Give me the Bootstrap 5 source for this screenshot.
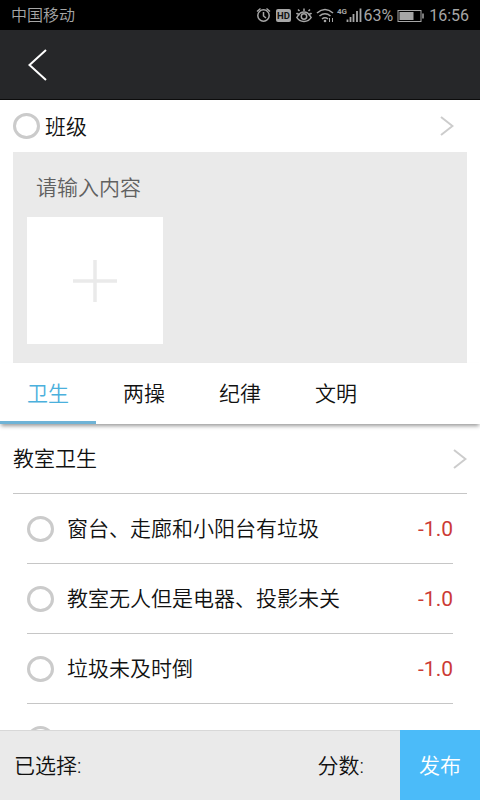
<!DOCTYPE html>
<html lang="zh-CN">
<head>
<meta charset="utf-8">
<meta name="viewport" content="width=device-width, initial-scale=1">
<title>班级</title>
<link href="https://cdn.jsdelivr.net/npm/bootstrap@5.3.0/dist/css/bootstrap.min.css" rel="stylesheet">
<style>
body { font-family: Roboto, "Noto Sans CJK SC", sans-serif; font-size: 21px; line-height: 32px; font-weight: 350; color: #111; background: #fff; }
.status-bar { height: 30px; background: #000; color: #a6a6a6; font-size: 16px; line-height: 30px; padding: 2px 11px 0; }
.status-bar svg { display: block; flex: none; }
.status-bar svg text { font-family: Roboto, sans-serif; font-weight: 700; stroke: none; }
.status-info { font-weight: 400; }
.title-bar { height: 70px; background: #262729; border-bottom: 1px solid #0c0c0c; padding: 0 28px; }
.class-row { height: 52px; padding: 0 26px 0 13px; }
.class-row label { padding: 2px 0 0 5px; }
.round-check.form-check-input { width: 27px; height: 26px; margin: 0; border: 3px solid #cbcbcb; border-radius: 50%; background-color: #fff; flex: none; }
.compose { background: #eaeaea; margin: 0 13px; padding: 14px 14px 19px; }
.compose-text.form-control { background: transparent; border: 0; border-radius: 0; box-shadow: none; resize: none; height: 51px; padding: 6px 9px; font-size: 21px; line-height: 32px; font-weight: 350; color: #111; }
.compose-text.form-control::placeholder { color: #606060; opacity: 1; }
.add-photo.btn { width: 136px; height: 127px; background: #fff; }
.tab-strip { height: 61px; box-shadow: 0 3px 4px -1px rgba(0,0,0,.4); background: #fff; z-index: 1; }
.tab-strip .nav-link { width: 20%; padding: 4px 0 0; color: #111; background: transparent; border: 0; border-bottom: 3px solid transparent; border-radius: 0; }
.tab-strip .nav-link.active { color: #4bb0dc; border-bottom-color: #6fb3d6; }
.group-row { height: 70px; border-bottom: 1px solid #c6c6c6; margin: 0 13px; }
.group-row span { padding-top: 1px; }
.item-row { height: 70px; border-bottom: 1px solid #c6c6c6; margin: 0 27px; }
.item-row label { padding: 1px 0 0 13px; }
.score { color: #cc3a35; font-weight: 400; }
.item-list { min-height: 0; }
.bottom-bar { height: 70px; background: #eaeaea; border-top: 1px solid #d8d8d8; }
.picked { padding-left: 14px; }
.total { padding-right: 36px; }
.publish.btn { width: 80px; background: #4bbbf9; color: #fff; border: 0; border-radius: 0; font-size: 21px; font-weight: 350; padding: 3px 0 0; margin-top: -1px; }
</style>
<script src="https://cdn.jsdelivr.net/npm/bootstrap@5.3.0/dist/js/bootstrap.bundle.min.js"></script>
</head>
<body>
<div class="d-flex flex-column vh-100 overflow-hidden">
  <div class="status-bar d-flex align-items-center justify-content-between flex-shrink-0">
    <span>中国移动</span>
    <div class="status-info d-flex align-items-center">
      <svg width="108" height="20" viewBox="255 6 108 20" fill="none" stroke="#a6a6a6" stroke-width="1.5" aria-hidden="true">
        <circle cx="263.500" cy="15.500" r="5.700"/><path d="M263.500 12v4l2.500 2M257 11.500l3.500-3M266.500 8.500l3.500 3"/>
        <rect x="276" y="9" width="15" height="13" rx="2" fill="#a6a6a6" stroke="none"/>
        <text x="277" y="19" font-size="9.500" fill="#111">HD</text>
        <path d="M296.500 13q1.500 2 4 0q3.500-2 7 0q2.500 2 4 0M296.500 17q2.500 4.500 7.500 4.500t7.500-4.500M297 17q1.500-2 3-3M311 17q-1.500-2-3-3"/><circle cx="304" cy="16.500" r="2.700"/><path d="M299.500 11l-1.500-1.500M304 11V8.500M308.500 11l1.500-1.500"/>
        <path d="M317 13q8-7 16 0M319.500 16q5.500-4.500 11 0M322 19q3-2.500 6 0" stroke-width="1.600"/><circle cx="325" cy="21" r="1.300" fill="#a6a6a6" stroke="none"/><path d="M329.500 18v4M332.500 18v4" stroke-width="1"/>
        <text x="337" y="14" font-size="8" fill="#a6a6a6">4G</text>
        <path d="M347.500 22v-2.500M350.500 22v-5M353.500 22v-8M357 22V11M360.500 22V8.500" stroke-width="1.800"/>
      </svg>
      <span class="me-1">63%</span>
      <svg width="28" height="14" viewBox="0 0 28 14" aria-hidden="true"><rect x="1" y="1.500" width="23" height="11" fill="none" stroke="#a6a6a6"/><rect x="2.500" y="3" width="14" height="8" fill="#a6a6a6"/><path d="M26 4.500v5" stroke="#a6a6a6" stroke-width="1.500"/></svg>
      <span class="ms-1">16:56</span>
    </div>
  </div>
  <header class="title-bar d-flex align-items-center flex-shrink-0">
    <button type="button" class="btn p-0 border-0 d-flex" aria-label="返回">
      <svg width="20" height="32" viewBox="0 0 20 32" fill="none" stroke="#fff" stroke-width="2"><path d="M18 1L1.500 16L18 31"/></svg>
    </button>
  </header>
  <div class="class-row d-flex align-items-center justify-content-between flex-shrink-0">
    <div class="d-flex align-items-center">
      <input class="form-check-input round-check" type="radio" name="scope" id="scope-class">
      <label for="scope-class">班级</label>
    </div>
    <button type="button" class="btn p-0 border-0 d-flex" aria-label="选择班级">
      <svg width="14" height="20" viewBox="0 0 14 20" fill="none" stroke="#cccccc" stroke-width="2"><path d="M1 1L12.500 10L1 19"/></svg>
    </button>
  </div>
  <div class="compose flex-shrink-0">
    <textarea class="form-control compose-text" placeholder="请输入内容" aria-label="内容"></textarea>
    <button type="button" class="btn add-photo p-0 border-0 rounded-0 d-flex align-items-center justify-content-center" aria-label="添加图片">
      <svg width="44" height="42" viewBox="0 0 44 42" stroke="#eaeaea" stroke-width="3.500"><path d="M22 0v42M0 21h44"/></svg>
    </button>
  </div>
  <nav class="nav tab-strip flex-shrink-0" role="tablist">
    <button type="button" class="nav-link active" role="tab" aria-selected="true" data-bs-toggle="tab">卫生</button>
    <button type="button" class="nav-link" role="tab" aria-selected="false" data-bs-toggle="tab">两操</button>
    <button type="button" class="nav-link" role="tab" aria-selected="false" data-bs-toggle="tab">纪律</button>
    <button type="button" class="nav-link" role="tab" aria-selected="false" data-bs-toggle="tab">文明</button>
  </nav>
  <main class="item-list flex-grow-1 overflow-hidden">
    <div class="group-row d-flex align-items-center justify-content-between">
      <span>教室卫生</span>
      <button type="button" class="btn p-0 border-0 d-flex" aria-label="展开教室卫生">
        <svg width="14" height="20" viewBox="0 0 14 20" fill="none" stroke="#cccccc" stroke-width="2"><path d="M1 1L12.500 10L1 19"/></svg>
      </button>
    </div>
    <div class="item-row d-flex align-items-center">
      <input class="form-check-input round-check" type="checkbox" id="item-1">
      <label class="flex-grow-1" for="item-1">窗台、走廊和小阳台有垃圾</label>
      <span class="score">-1.0</span>
    </div>
    <div class="item-row d-flex align-items-center">
      <input class="form-check-input round-check" type="checkbox" id="item-2">
      <label class="flex-grow-1" for="item-2">教室无人但是电器、投影未关</label>
      <span class="score">-1.0</span>
    </div>
    <div class="item-row d-flex align-items-center">
      <input class="form-check-input round-check" type="checkbox" id="item-3">
      <label class="flex-grow-1" for="item-3">垃圾未及时倒</label>
      <span class="score">-1.0</span>
    </div>
    <div class="item-row d-flex align-items-center">
      <input class="form-check-input round-check" type="checkbox" id="item-4" aria-label="扣分项">
    </div>
  </main>
  <footer class="bottom-bar d-flex flex-shrink-0">
    <span class="picked flex-grow-1 align-self-center">已选择:</span>
    <span class="total align-self-center">分数:</span>
    <button type="button" class="btn publish">发布</button>
  </footer>
</div>
</body>
</html>
